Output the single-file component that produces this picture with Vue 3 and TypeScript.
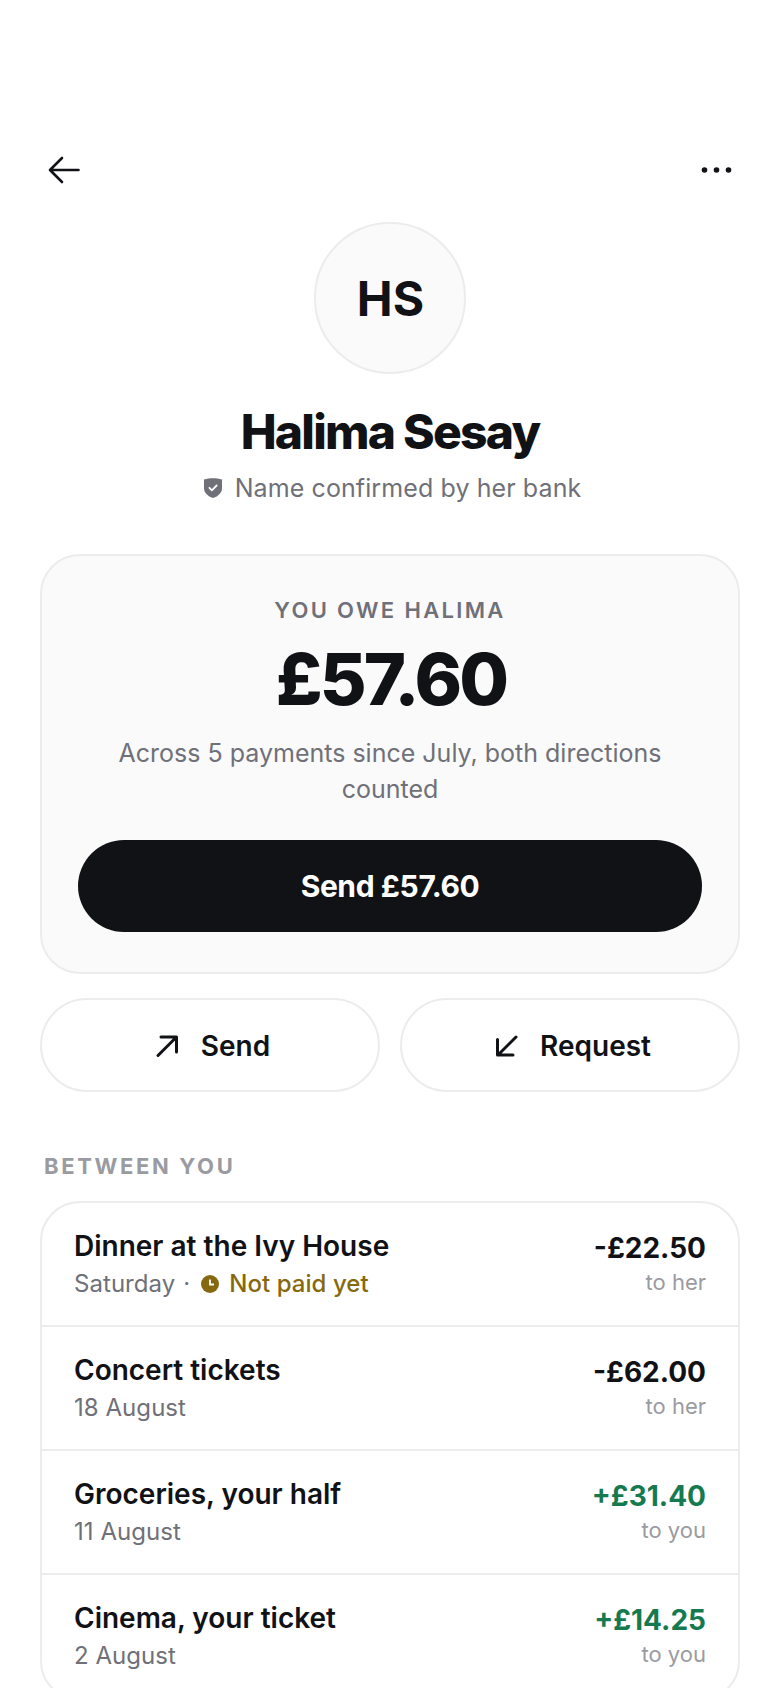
<script setup lang="ts">
interface Payment {
  title: string
  date: string
  amount: string
  direction: string
  incoming: boolean
  pending?: boolean
}

const payments: Payment[] = [
  { title: 'Dinner at the Ivy House', date: 'Saturday', amount: '-£22.50', direction: 'to her', incoming: false, pending: true },
  { title: 'Concert tickets', date: '18 August', amount: '-£62.00', direction: 'to her', incoming: false },
  { title: 'Groceries, your half', date: '11 August', amount: '+£31.40', direction: 'to you', incoming: true },
  { title: 'Cinema, your ticket', date: '2 August', amount: '+£14.25', direction: 'to you', incoming: true },
]
</script>

<template>
  <div class="screen">
    <header class="topbar">
      <svg class="top-icon" viewBox="0 0 36 36" fill="none" stroke="#111216" stroke-width="2.6" stroke-linecap="round" stroke-linejoin="round">
        <path d="M32.500 18H4M16 6 4 18l12 12" />
      </svg>
      <svg class="top-icon" viewBox="0 0 36 36" fill="#111216">
        <circle cx="6.500" cy="18" r="2.800" />
        <circle cx="18.500" cy="18" r="2.800" />
        <circle cx="30.500" cy="18" r="2.800" />
      </svg>
    </header>

    <section class="profile">
      <div class="avatar">HS</div>
      <h1 class="name">Halima Sesay</h1>
      <p class="verified">
        <svg class="shield" viewBox="0 0 20 22">
          <path d="M1 2.600C4 1.600 7 1.200 10 1.200s6 .4 9 1.400v8.600c0 4.400-3.600 8-9 9.800-5.400-1.800-9-5.400-9-9.800z" fill="#6f7078" />
          <path d="M6.400 10.800l2.500 2.500 4.700-4.800" fill="none" stroke="#fff" stroke-width="1.800" stroke-linecap="round" stroke-linejoin="round" />
        </svg>
        Name confirmed by her bank
      </p>
    </section>

    <section class="balance">
      <div class="balance-label">YOU OWE HALIMA</div>
      <div class="balance-amount">£57.60</div>
      <p class="balance-note">Across 5 payments since July, both directions counted</p>
      <button class="primary">Send £57.60</button>
    </section>

    <div class="actions">
      <button class="action">
        <svg class="action-icon" viewBox="0 0 28 28" fill="none" stroke="#111216" stroke-width="3" stroke-linecap="round" stroke-linejoin="round">
          <path d="M5 23.500 22.500 6M8 5h15.500v15" />
        </svg>
        Send
      </button>
      <button class="action">
        <svg class="action-icon" viewBox="0 0 28 28" fill="none" stroke="#111216" stroke-width="3" stroke-linecap="round" stroke-linejoin="round">
          <path d="M24 5 6.500 22.500M5.500 7.500V23h15.500" />
        </svg>
        Request
      </button>
    </div>

    <h2 class="section-title">BETWEEN YOU</h2>

    <ul class="list">
      <li v-for="p in payments" :key="p.title" class="row">
        <div class="row-left">
          <div class="row-title">{{ p.title }}</div>
          <div class="row-sub">
            {{ p.date }}
            <template v-if="p.pending">
              <span class="dot">·</span>
              <svg class="clock" viewBox="0 0 18 18">
                <circle cx="9" cy="9" r="9" fill="#86690f" />
                <path d="M9 4.500V9.500H13" fill="none" stroke="#fff" stroke-width="1.800" />
              </svg>
              <span class="pending">Not paid yet</span>
            </template>
          </div>
        </div>
        <div class="row-right">
          <div class="row-amount" :class="{ incoming: p.incoming }">{{ p.amount }}</div>
          <div class="row-direction">{{ p.direction }}</div>
        </div>
      </li>
    </ul>
  </div>
</template>

<style>
html,
body {
  margin: 0;
  background: #fff;
}
</style>

<style scoped>
.screen {
  width: 780px;
  height: 1688px;
  overflow: hidden;
  box-sizing: border-box;
  padding-top: 152px;
  background: #fff;
  font-family: Inter, "Liberation Sans", sans-serif;
  color: #111216;
}

.topbar {
  display: flex;
  justify-content: space-between;
  padding: 0 46px;
}

.top-icon {
  width: 36px;
  height: 36px;
  display: block;
}

.profile {
  display: flex;
  flex-direction: column;
  align-items: center;
  margin-top: 34px;
}

.avatar {
  width: 152px;
  height: 152px;
  box-sizing: border-box;
  border: 2px solid #ececec;
  border-radius: 50%;
  background: #fafafa;
  display: flex;
  align-items: center;
  justify-content: center;
  font-size: 48px;
  font-weight: 700;
  padding-left: 1px;
}

.name {
  margin: 30px 0 0;
  font-size: 48px;
  line-height: 56px;
  font-weight: 800;
  letter-spacing: -1.750px;
}

.verified {
  margin: 10px 0 0;
  padding-left: 4px;
  display: flex;
  align-items: center;
  gap: 12px;
  font-size: 25px;
  line-height: 36px;
  letter-spacing: 0.100px;
  color: #6f7078;
}

.shield {
  width: 20px;
  height: 22px;
}

.balance {
  margin: 48px 40px 0;
  padding: 40px 36px 40px;
  border: 2px solid #ececec;
  border-radius: 40px;
  background: #fafafa;
  text-align: center;
}

.balance-label {
  font-size: 22px;
  line-height: 28px;
  font-weight: 600;
  letter-spacing: 2.350px;
  color: #6f7078;
}

.balance-amount {
  margin-top: 13px;
  padding-left: 2px;
  font-size: 72px;
  line-height: 84px;
  font-weight: 800;
  letter-spacing: -2.880px;
}

.balance-note {
  margin: 14px 0 0;
  font-size: 25px;
  line-height: 36px;
  color: #6f7078;
}

.primary {
  display: block;
  width: 100%;
  height: 92px;
  margin-top: 33px;
  border: none;
  border-radius: 46px;
  background: #111216;
  color: #fff;
  font-family: inherit;
  font-size: 30px;
  font-weight: 700;
  letter-spacing: -0.400px;
}

.actions {
  display: grid;
  grid-template-columns: 1fr 1fr;
  gap: 20px;
  margin: 24px 40px 0;
}

.action {
  height: 94px;
  padding: 2px 0 0 3px;
  display: flex;
  align-items: center;
  justify-content: center;
  gap: 20px;
  border: 2px solid #ececec;
  border-radius: 47px;
  background: #fff;
  color: #111216;
  font-family: inherit;
  font-size: 28px;
  font-weight: 600;
}

.action-icon {
  width: 28px;
  height: 28px;
}

.section-title {
  margin: 60px 0 0 44px;
  font-size: 22px;
  line-height: 28px;
  font-weight: 700;
  letter-spacing: 2.650px;
  color: #9a9ba1;
}

.list {
  list-style: none;
  margin: 21px 40px 0;
  padding: 0;
  border: 2px solid #ececec;
  border-radius: 40px;
}

.row {
  display: flex;
  justify-content: space-between;
  align-items: center;
  box-sizing: border-box;
  height: 124px;
  padding: 0 32px;
  border-bottom: 2px solid #ececec;
}

.row-title {
  font-size: 28px;
  line-height: 36px;
  font-weight: 600;
  margin-top: 1px;
}

.row-sub {
  display: flex;
  align-items: center;
  margin-top: 3px;
  font-size: 24px;
  line-height: 34px;
  letter-spacing: 0.050px;
  color: #6f7078;
}

.dot {
  margin: 0 11px 0 8px;
}

.clock {
  width: 18px;
  height: 18px;
  margin-right: 10px;
}

.pending {
  color: #86690f;
  font-weight: 500;
}

.row-right {
  text-align: right;
}

.row-amount {
  font-size: 28px;
  line-height: 36px;
  font-weight: 700;
}

.row-amount.incoming {
  color: #167a50;
}

.row-direction {
  margin: 1px 0;
  font-size: 22px;
  line-height: 30px;
  color: #9a9ba1;
}
</style>
